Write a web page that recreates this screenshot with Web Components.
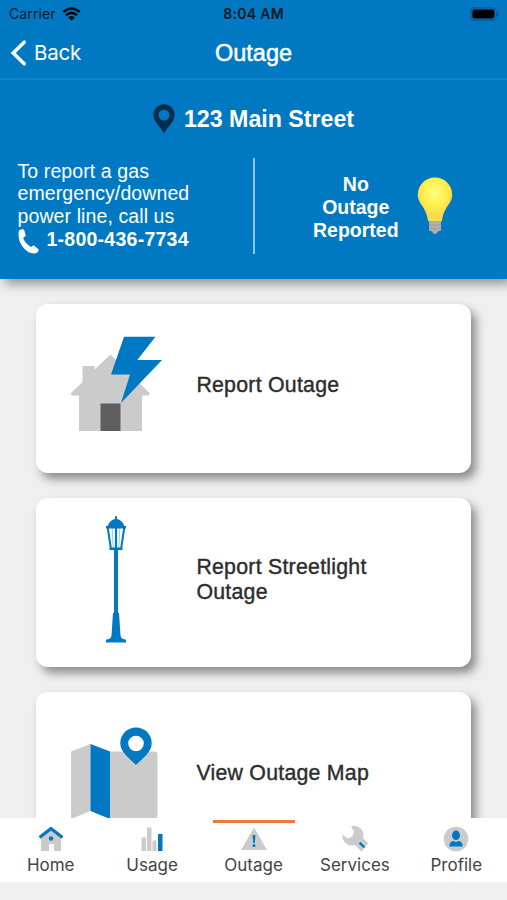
<!DOCTYPE html>
<html lang="en">
<head>
<meta charset="utf-8">
<title>Outage</title>
<style>
html,body{margin:0;height:900px;overflow:hidden;background:#efefef}
body{font-family:"Liberation Sans",Arial,sans-serif}
</style>
</head>
<body>
<outage-app></outage-app>
<script>
const define = (name, html) => customElements.define(name, class extends HTMLElement {
  connectedCallback() {
    if (this.shadowRoot) return;
    this.attachShadow({ mode: 'open' }).innerHTML = html;
  }
});

define('status-bar', `
<style>
:host{display:grid;grid-template-columns:1fr auto 1fr;align-items:center;height:27px;padding:0 7px 0 9px;color:#061a2b;font:14px/20px Inter,sans-serif}
.l{display:flex;align-items:center;gap:6px;letter-spacing:.12px}
.time{font-weight:600;letter-spacing:.3px;margin-right:2px}
.bat{justify-self:end}
svg{display:block}
</style>
<div class="l"><span>Carrier</span>
<svg width="19" height="14" viewBox="0 0 19 14"><g fill="none" stroke="#000d18" stroke-width="2.6"><path d="M1.200 5Q9.500-2 17.800 5M4 8.200Q9.500 3.400 15 8.200"/></g><path d="M6.200 10.400Q9.500 7.600 12.800 10.400L9.500 13.800Z" fill="#000d18"/></svg></div>
<span class="time">8:04 AM</span>
<svg class="bat" width="30" height="14" viewBox="0 0 30 14"><rect x=".8" y=".8" width="25.400" height="12.400" rx="3.600" fill="none" stroke="#05568d" stroke-width="1.200"/><rect x="2.400" y="2.600" width="22" height="8.800" rx="2" fill="#000"/><path d="M27.500 5v4q1.700-.7 1.700-2t-1.700-2Z" fill="#05568d"/></svg>`);

define('nav-bar', `
<style>
:host{display:grid;grid-template-columns:1fr auto 1fr;align-items:center;height:51px;padding:0 10px;border-bottom:2px solid #1583c6;color:#fff}
.back{display:flex;align-items:center;gap:7px;font:20.500px/26px Inter,sans-serif;letter-spacing:-.25px}
.title{font-size:23.500px;line-height:28px;-webkit-text-stroke:.5px #fff}
</style>
<div class="back"><svg width="17" height="26" viewBox="0 0 17 26"><path d="M14.200 2.200 3.200 13l11 10.800" fill="none" stroke="#fff" stroke-width="3.500" stroke-linecap="round"/></svg><span>Back</span></div>
<div class="title"><slot></slot></div>`);

define('outage-summary', `
<style>
:host{display:block;color:#fff}
.addr{display:flex;justify-content:center;align-items:center;gap:9px;height:78px;font:bold 23.200px/28px "Liberation Sans",sans-serif}
.row{display:grid;grid-template-columns:253px 2px 1fr;height:95px}
.call{padding:1.500px 0 0 17.500px;font-size:19.500px;line-height:22.800px;letter-spacing:.1px}
.phone{display:flex;gap:8px;font-weight:bold;letter-spacing:.25px}
.phone svg{margin-top:1px}
.rule{background:#8fc6ea}
.status{display:flex;align-items:center;padding-left:58px;gap:18px;font:bold 19.500px/23px "Liberation Sans",sans-serif;text-align:center;padding-top:3.500px}
.status svg{margin-top:-3px}
svg{display:block}
</style>
<div class="addr"><svg width="22" height="30" viewBox="0 0 22 30"><path fill-rule="evenodd" d="M11 .3A10.700 10.700 0 0 1 21.700 11C21.700 18 14 23 11 29.500 8 23 .3 18 .3 11A10.700 10.700 0 0 1 11 .3ZM11 5.700a5.500 5.500 0 1 0 0 11 5.500 5.500 0 0 0 0-11Z" fill="#042e4c"/></svg><span>123 Main Street</span></div>
<div class="row">
<div class="call"><div>To report a gas</div><div>emergency/downed</div><div>power line, call us</div>
<div class="phone"><svg width="21" height="25" viewBox="0 0 21 25"><path d="M1 1.500Q3.500-.4 6 .5L7.800 6.600 5.200 9.100Q7.500 15.300 13 17.900L15.600 16.200 20.800 20.500Q20.300 24.300 16 24.500 9.500 24.400 4.200 17.200-.8 9.500 1 1.500Z" fill="#fff"/></svg><span>1-800-436-7734</span></div></div>
<div class="rule"></div>
<div class="status"><div>No<br>Outage<br>Reported</div>
<svg width="36" height="58" viewBox="0 0 36 58"><defs><radialGradient id="g" cx=".5" cy=".34" r=".5"><stop offset="0" stop-color="#fffb82"/><stop offset=".65" stop-color="#fff04b"/><stop offset="1" stop-color="#f8dc4c"/></radialGradient></defs><path d="M12 44.500h12v9l-3 1-1.500 2.300h-3L15 54.500l-3-1Z" fill="#afafaf"/><path d="M12 48h12M12 51.500h12" stroke="#9b9b9b" stroke-width=".8"/><path d="M18 .5A17.200 17.200 0 0 1 35.200 17.700C35.200 27 27 29 25 43.500q-.2 1-1.300 1H12.300q-1.100 0-1.300-1C9 29 .8 27 .8 17.700A17.200 17.200 0 0 1 18 .5Z" fill="url(#g)"/></svg></div></div>`);

define('action-card', `
<style>
:host{display:flex;align-items:center;box-sizing:border-box;flex:none;height:169px;width:435px;padding-left:34px;gap:34px;border-radius:12px;background:#fff;box-shadow:5px 6px 10px rgba(0,0,0,.42);color:#2d2d2d;font-size:21.300px;line-height:25.500px;letter-spacing:.25px;-webkit-text-stroke:.4px #2d2d2d}
.icon{width:92px;flex:none;display:flex;justify-content:center}
.text{width:190px;margin-top:-5px}
</style>
<div class="icon"><slot name="icon"></slot></div><div class="text"><slot></slot></div>`);

define('tab-item', `
<style>
:host{display:flex;flex:1;flex-direction:column;align-items:center;color:#444;font:17px/22px Inter,sans-serif;letter-spacing:0}
.bar{width:82px;height:2.500px;margin-top:2px;background:var(--bar,transparent)}
.icon{height:29px;display:flex;align-items:center;margin-top:2px}
</style>
<div class="bar"></div><div class="icon"><slot name="icon"></slot></div><span><slot></slot></span>`);

define('tab-bar', `
<style>:host{display:flex;box-sizing:border-box;height:82px;flex:none;background:#fff;z-index:2;position:relative;border-bottom:18px solid #f0f0f0}</style><slot></slot>`);

define('outage-app', `
<style>
:host{display:flex;flex-direction:column;width:507px;height:900px;overflow:hidden;background:#efefef}
header{flex:none;height:279px;background:#0079c2;box-shadow:5px 5px 10px rgba(0,0,0,.38);z-index:1}
main{flex:1;min-height:0;overflow:hidden;display:flex;flex-direction:column;gap:25px;padding:25px 0 0 36.400px}
svg{display:block}
.on{--bar:#ee7840}
</style>
<header><status-bar></status-bar><nav-bar>Outage</nav-bar><outage-summary></outage-summary></header>
<main>
<action-card><svg slot="icon" width="92" height="98" viewBox="0 0 92 98" style="margin-top:-8px"><path d="M.5 57.500 12.500 46V30h12v3.500L40.500 18.500 80 57.500l-1.500 2H72V95H9V59.500H2Z" fill="#cbcbcb"/><path d="M30.500 67.500h20V95h-20Z" fill="#5e5e5e"/><path d="M54 .7h31.500L67.300 24H92L51 67 60 38.500H41Z" fill="#0079c2"/></svg>Report Outage</action-card>
<action-card><svg slot="icon" width="20" height="128" viewBox="0 0 20 128" style="margin-top:-8px"><g fill="#0079c2"><path d="M9 1.200h2V4q5 1 7.500 7H20v2.500H0V11h1.500Q4 5 9 4ZM3.500 32.500h13v2.500h-13ZM8 34h4v64h1l1.500 22.500q.5 3.500 4.500 4h1v3H0v-3h1q4-.5 4.500-4L7 98h1Z"/></g><path d="M1.800 13 4.800 33M18.200 13 15.200 33" stroke="#0079c2" stroke-width="2"/><path d="M10 13v20" stroke="#0079c2" stroke-width="2.200"/><path d="M6.200 13 7.200 33M13.800 13 12.800 33" stroke="#0079c2" stroke-width=".4"/></svg>Report Streetlight Outage</action-card>
<action-card><svg slot="icon" width="92" height="94" viewBox="0 0 92 94" style="margin-top:-6px"><path d="M1 24.500 20.500 17v67L1 92ZM40 24.500h44.500q3 0 3 3V88q0 4-4 4H40Z" fill="#cbcbcb"/><path d="M20.500 17 40 24.500V92L20.500 84Z" fill="#0079c2"/><path fill-rule="evenodd" d="M66 .5A15.700 15.700 0 0 1 81.700 16.200C81.700 25.500 72 31.500 66 38 60 31.500 50.300 25.500 50.300 16.200A15.700 15.700 0 0 1 66 .5Zm0 8.200a7.800 7.800 0 1 0 0 15.600 7.800 7.800 0 0 0 0-15.600Z" fill="#0079c2"/></svg>View Outage Map</action-card>
</main>
<tab-bar>
<tab-item><svg slot="icon" width="26" height="26" viewBox="0 0 26 26"><path d="M3 11.500 13 4l10 7.500V25h-7v-7h-5v7H3Z" fill="#cbcbcb"/><path d="M1.500 11.500 13 2.500l11.500 9" fill="none" stroke="#0079c2" stroke-width="3.200"/><circle cx="13" cy="12.500" r="2.200" fill="#0079c2"/></svg>Home</tab-item>
<tab-item><svg slot="icon" width="22" height="26" viewBox="0 0 22 26"><path d="M.5 11.500H5V25H.5ZM6 1.500h4.500V25H6ZM11.500 14.500h4V25h-4Z" fill="#cbcbcb"/><path d="M17 8h4.500v17H17Z" fill="#0079c2"/></svg>Usage</tab-item>
<tab-item class="on"><svg slot="icon" width="28" height="26" viewBox="0 0 28 26"><path d="M14 1.500 27 24H1Z" fill="#cbcbcb"/><path d="M12.600 9h2.800l-.6 8h-1.600Z" fill="#0079c2"/><circle cx="14" cy="19.600" r="1.500" fill="#0079c2"/></svg>Outage</tab-item>
<tab-item><svg slot="icon" width="28" height="28" viewBox="0 0 28 28"><path d="M10 1.200Q16-.2 20 3.800 23.500 8 22 13L27.200 18.500 20.500 26.500 14 20Q8 21.500 4 17.500 .5 13.500 1.200 9.500L6.500 13.500Q12.500 12.500 13 6.500Z" fill="#cbcbcb"/><path d="m18.200 17.400 5.400 5.200" stroke="#e4e4e4" stroke-width="4"/><path d="m18.500 17.600 4.900 4.800" stroke="#0079c2" stroke-width="2.600"/></svg>Services</tab-item>
<tab-item><svg slot="icon" width="26" height="26" viewBox="0 0 26 26"><circle cx="13" cy="13" r="12.300" fill="#cbcbcb"/><ellipse cx="13" cy="9.300" rx="4" ry="4.800" fill="#0079c2"/><path d="M6.300 20.500q0-5 4-5.500 2.700 1.500 5.400 0 4 .5 4 5.500Z" fill="#0079c2"/></svg>Profile</tab-item>
</tab-bar>`);
</script>
</body>
</html>
